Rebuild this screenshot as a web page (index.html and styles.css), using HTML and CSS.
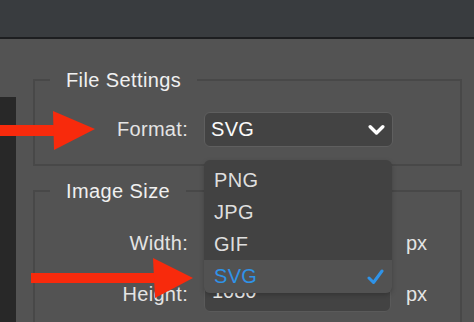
FILE: index.html
```html
<!DOCTYPE html>
<html lang="en">
<head>
<meta charset="utf-8">
<title>Export Settings</title>
<link rel="stylesheet" href="styles.css">
</head>
<body>
<div class="topbar"></div>
<div class="main">
  <aside class="side"></aside>
  <div class="content">
    <fieldset class="group group-file">
      <legend class="legend">File Settings</legend>
      <div class="row">
        <span class="lbl">Format:</span>
        <div class="select-wrap">
          <div class="select">
            <span class="select-value">SVG</span>
            <svg class="chev" width="17" height="12" viewBox="0 0 17 12"><path d="M2.2 2.8 L8.5 9 L14.8 2.8" fill="none" stroke="#ffffff" stroke-width="3.4" stroke-linecap="round" stroke-linejoin="round"/></svg>
          </div>
          <ul class="menu">
            <li class="item">PNG</li>
            <li class="item">JPG</li>
            <li class="item">GIF</li>
            <li class="item item-on"><span>SVG</span>
              <svg class="check" width="17" height="16" viewBox="0 0 17 16"><path d="M2 9 L6.5 13.5 L15 2" fill="none" stroke="#2f93e8" stroke-width="3" stroke-linecap="round" stroke-linejoin="round"/></svg>
            </li>
          </ul>
        </div>
      </div>
    </fieldset>
    <fieldset class="group group-size">
      <legend class="legend">Image Size</legend>
      <div class="row">
        <span class="lbl">Width:</span>
        <div class="field"></div>
        <span class="unit">px</span>
      </div>
      <div class="row">
        <span class="lbl">Height:</span>
        <div class="field field-low">1080</div>
        <span class="unit">px</span>
      </div>
    </fieldset>
  </div>
</div>
<svg class="arrows" width="474" height="322" viewBox="0 0 474 322">
  <rect x="0" y="125" width="57" height="11" fill="#f82a0c"/>
  <polygon points="53,111 95,129 54,150" fill="#f82a0c"/>
  <rect x="31" y="273" width="126" height="10" fill="#f82a0c"/>
  <polygon points="153,258 193,278 155,298" fill="#f82a0c"/>
</svg>
</body>
</html>
```
FILE: styles.css
```css
* { box-sizing: border-box; }
html, body {
  margin: 0;
  padding: 0;
  width: 474px;
  height: 322px;
  overflow: hidden;
  background: #535353;
  font-family: "Liberation Sans", Arial, sans-serif;
}
body { position: relative; }

.topbar {
  height: 39px;
  background: #393c3f;
  border-bottom: 2px solid #1d1e20;
}

.main {
  display: flex;
  height: 283px;
}

.side {
  width: 16px;
  margin-top: 58px;
  background: #282828;
  flex: none;
}

.content {
  margin-left: 17px;
  margin-top: 29px;
  width: 429px;
}

.group {
  margin: 0;
  padding: 0;
  min-width: 0;
  border: 2px solid #484848;
}

.group-file { padding: 20px 0 17px; }
.group-size { margin-top: 13px; padding: 23px 0 20px; }

.legend {
  margin-left: 15px;
  padding: 0 16px;
  font-size: 20px;
  line-height: 24px;
  color: #f0f0f0;
  letter-spacing: 0.4px;
}

.row {
  display: grid;
  grid-template-columns: 153px 189px auto;
  column-gap: 16px;
  align-items: center;
  height: 35px;
}
.group-size .row + .row { margin-top: 16px; }
.group-size .row { column-gap: 15px; grid-template-columns: 153px 188px auto; }
.group-size .row .field { margin-left: 1px; }

.lbl {
  text-align: right;
  font-size: 20px;
  color: #e4e4e4;
  letter-spacing: 0.3px;
}

.select-wrap { position: relative; }

.select {
  height: 35px;
  display: flex;
  align-items: center;
  justify-content: space-between;
  padding: 0 7px 0 6px;
  background: #434343;
  border: 1.5px solid #5f5f5f;
  border-radius: 6px;
}
.select-value {
  font-size: 20px;
  color: #fafafa;
  letter-spacing: 0.3px;
}
.chev { display: block; }

.menu {
  position: absolute;
  z-index: 10;
  left: 0;
  top: calc(100% + 13px);
  width: 188px;
  margin: 0;
  padding: 4px 0 0;
  list-style: none;
  background: #424242;
  border-radius: 6px;
  overflow: hidden;
  box-shadow: 0 2px 5px rgba(0,0,0,0.22);
}
.item {
  height: 32px;
  display: flex;
  align-items: center;
  justify-content: space-between;
  padding: 0 8px 0 10px;
  font-size: 20px;
  color: #dedede;
  letter-spacing: 0.3px;
}
.item:last-child { height: 33px; }
.item-on {
  background: #525252;
  color: #2f93e8;
}
.check { display: block; }

.field {
  height: 35px;
  display: flex;
  align-items: center;
  padding: 0 7px;
  background: #434343;
  border: 1.5px solid #5a5a5a;
  border-radius: 6px;
  font-size: 20px;
  color: #f0f0f0;
}
.field-low { padding-bottom: 7px; }

.unit {
  font-size: 20px;
  color: #e4e4e4;
}

.arrows {
  position: absolute;
  left: 0;
  top: 0;
  z-index: 20;
  pointer-events: none;
}
```
